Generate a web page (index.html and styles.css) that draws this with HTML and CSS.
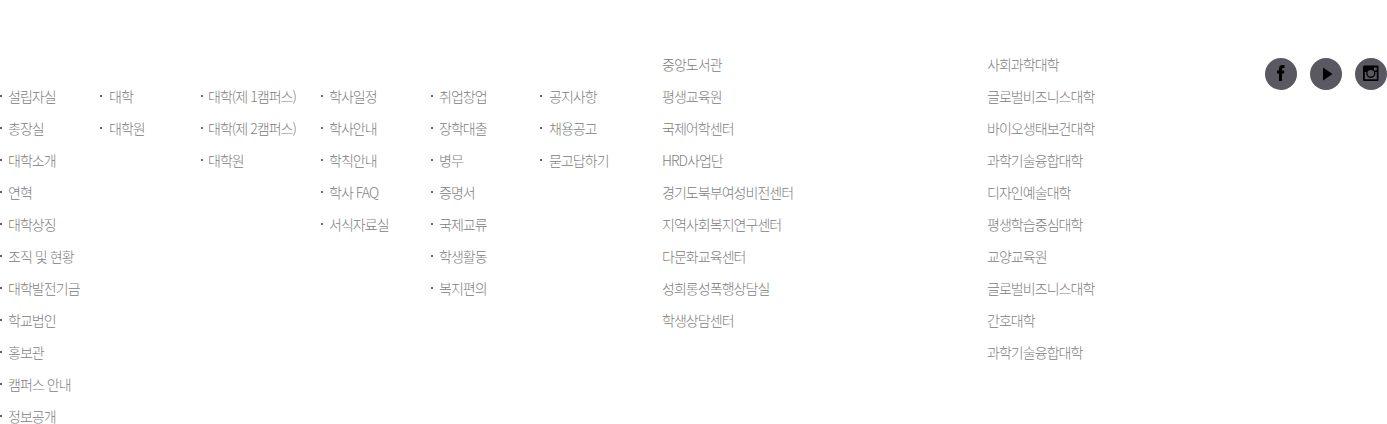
FILE: index.html
```html
<!DOCTYPE html>
<html lang="ko">
<head>
    <meta charset="UTF-8">
    <meta name="viewport" content="width=device-width, initial-scale=1.0">
    <title>Footer sitemap</title>
    <link rel="stylesheet" href="styles.css">
</head>
<body>

<footer class="sitemap">
    <ul class="menu menu-about">
        <li>설립자실</li>
        <li>총장실</li>
        <li>대학소개</li>
        <li>연혁</li>
        <li>대학상징</li>
        <li>조직 및 현황</li>
        <li>대학발전기금</li>
        <li>학교법인</li>
        <li>홍보관</li>
        <li>캠퍼스 안내</li>
        <li>정보공개</li>
    </ul>
    <ul class="menu menu-admission">
        <li>대학</li>
        <li>대학원</li>
    </ul>
    <ul class="menu menu-campus">
        <li>대학(제 1캠퍼스)</li>
        <li>대학(제 2캠퍼스)</li>
        <li>대학원</li>
    </ul>
    <ul class="menu menu-academic">
        <li>학사일정</li>
        <li>학사안내</li>
        <li>학칙안내</li>
        <li>학사 FAQ</li>
        <li>서식자료실</li>
    </ul>
    <ul class="menu menu-student">
        <li>취업창업</li>
        <li>장학대출</li>
        <li>병무</li>
        <li>증명서</li>
        <li>국제교류</li>
        <li>학생활동</li>
        <li>복지편의</li>
    </ul>
    <ul class="menu menu-notice">
        <li>공지사항</li>
        <li>채용공고</li>
        <li>묻고답하기</li>
    </ul>
    <ul class="links links-center">
        <li>중앙도서관</li>
        <li>평생교육원</li>
        <li>국제어학센터</li>
        <li>HRD사업단</li>
        <li>경기도북부여성비전센터</li>
        <li>지역사회복지연구센터</li>
        <li>다문화교육센터</li>
        <li>성희롱성폭행상담실</li>
        <li>학생상담센터</li>
    </ul>
    <ul class="links links-college">
        <li>사회과학대학</li>
        <li>글로벌비즈니스대학</li>
        <li>바이오생태보건대학</li>
        <li>과학기술융합대학</li>
        <li>디자인예술대학</li>
        <li>평생학습중심대학</li>
        <li>교양교육원</li>
        <li>글로벌비즈니스대학</li>
        <li>간호대학</li>
        <li>과학기술융합대학</li>
    </ul>
    <div class="social">
        <a class="social-btn" href="#" aria-label="Facebook">
            <svg width="32" height="32" viewBox="0 0 32 32"><path d="M14 23V15.500H12V12.500H14V11C14 8.500 15.200 7 17.500 7H19.500V10H18.200C17.300 10 17 10.400 17 11.300V12.500H19.300L19 15.500H17V23Z" fill="#000"/></svg>
        </a>
        <a class="social-btn" href="#" aria-label="YouTube">
            <svg width="32" height="32" viewBox="0 0 32 32"><path d="M13 9.500L22.500 16L13 22.500Z" fill="#000"/></svg>
        </a>
        <a class="social-btn" href="#" aria-label="Instagram">
            <svg width="32" height="32" viewBox="0 0 32 32"><path fill-rule="evenodd" d="M9.500 7.500H22C23 7.500 23.500 8 23.500 9V21.500C23.500 22.500 23 23 22 23H9.500C8.500 23 8 22.500 8 21.500V9C8 8 8.500 7.500 9.500 7.500ZM19 9.500V12.500H21.800V9.500ZM9.800 14V21.200H21.800V14H20.200A4.600 4.600 0 1 1 11.400 14ZM15.800 12A3.300 3.300 0 1 0 15.800 18.600A3.300 3.300 0 1 0 15.800 12Z" fill="#000"/></svg>
        </a>
    </div>
</footer>

</body>
</html>
```

FILE: styles.css
```css
html, body {
    height: 424px;
    overflow: hidden;
}

body {
    margin: 0;
    background-color: #fff;
    color: #808080;
    font-family: "Noto Sans CJK KR", "Noto Sans", sans-serif;
    font-size: 14px;
    font-weight: 300;
    letter-spacing: -0.95px;
}

.sitemap {
    display: flex;
    align-items: flex-start;
}

ul {
    margin: 0;
    padding: 0;
    list-style: none;
}

li {
    height: 32px;
    line-height: 32px;
    white-space: nowrap;
}

.menu {
    margin-top: 80px;
}

.menu li {
    position: relative;
    padding-left: 8px;
}

/* small square bullet */
.menu li::before {
    content: "";
    position: absolute;
    left: 0;
    top: 15px;
    width: 2px;
    height: 2px;
    background-color: #666;
}

.menu-about {
    width: 100px;
}

.menu-admission {
    width: 101px;
}

.menu-admission li {
    padding-left: 9px;
}

.menu-campus {
    width: 120px;
}

.menu-campus li {
    padding-left: 7px;
}

.menu-academic {
    width: 110px;
}

.menu-student {
    width: 109px;
}

.menu-notice {
    width: 122px;
}

.menu-notice li {
    padding-left: 9px;
}

.links {
    margin-top: 48px;
}

.links-center {
    width: 325px;
}

.links-college {
    width: 278px;
}

.social {
    display: flex;
    gap: 13px;
    margin-top: 58px;
}

.social-btn {
    display: block;
    width: 32px;
    height: 32px;
    border-radius: 50%;
    background-color: #5a5860;
}

.social-btn svg {
    display: block;
}
```
